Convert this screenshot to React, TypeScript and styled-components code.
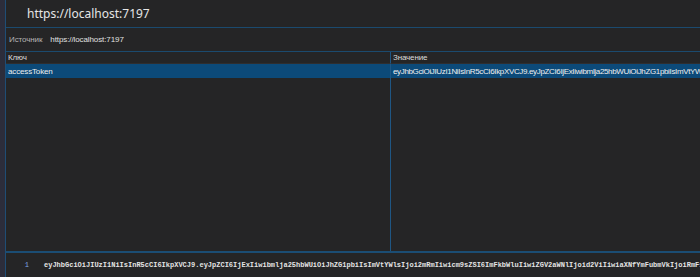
import React from "react";
import styled, { createGlobalStyle } from "styled-components";

const Global = createGlobalStyle`
  html, body { margin: 0; padding: 0; background: #252526; }
  body { font-family: "Liberation Sans", "Noto Sans", sans-serif; overflow: hidden; }
`;

const Root = styled.div`
  display: flex;
  width: 700px;
  height: 277px;
  background: #252526;
  overflow: hidden;
`;

const SideStrip = styled.div`
  width: 5px;
  flex: none;
  background: #2c2d3b;
  border-right: 1px solid #1f4d75;
`;

const Main = styled.div`
  flex: 1;
  min-width: 0;
  display: flex;
  flex-direction: column;
`;

const TitleBar = styled.div`
  height: 27px;
  flex: none;
  display: flex;
  align-items: center;
  padding-left: 21px;
  border-bottom: 1px solid #1b4a6e;
  color: #e6e6e6;
  font-family: "Noto Sans", sans-serif;
  font-size: 12px;
`;

const SourceRow = styled.div`
  height: 23px;
  flex: none;
  display: flex;
  align-items: center;
  gap: 8px;
  padding-left: 3px;
  border-bottom: 1px solid #1b4a6e;
  font-size: 8px;
  letter-spacing: -0.1px;
`;

const SourceLabel = styled.span`
  color: #b4b4b4;
`;

const SourceValue = styled.span`
  color: #e0e0e0;
`;

const Table = styled.div`
  flex: 1;
  display: grid;
  grid-template-columns: 384px 1fr;
  grid-template-rows: 12px 14px 1fr;
  min-height: 0;
`;

const Cell = styled.div<{ $header?: boolean; $selected?: boolean; $divider?: boolean; $tight?: boolean }>`
  display: flex;
  align-items: center;
  padding-left: 2px;
  font-size: 8px;
  letter-spacing: ${(p) => (p.$tight ? "-0.35px" : "-0.15px")};
  white-space: nowrap;
  overflow: hidden;
  color: ${(p) => (p.$selected ? "#f0f0f0" : "#dcdcdc")};
  background: ${(p) => (p.$selected ? "#0c4a79" : "transparent")};
  border-left: ${(p) => (p.$divider ? "1px solid #1f5683" : "none")};
  border-bottom: ${(p) => (p.$header ? "1px solid #2e2e30" : "none")};
`;

const Editor = styled.div`
  height: 24px;
  flex: none;
  display: flex;
  align-items: center;
  border-top: 2px solid #1b4d74;
  font-family: "Liberation Mono", "DejaVu Sans Mono", monospace;
  font-size: 7px;
  white-space: nowrap;
  overflow: hidden;
`;

const LineNo = styled.span`
  width: 38px;
  flex: none;
  text-align: right;
  padding-right: 15px;
  box-sizing: border-box;
  color: #7fa7e0;
`;

const Code = styled.span`
  color: #e4e4e4;
  font-weight: bold;
`;

const token =
  "eyJhbGciOiJIUzI1NiIsInR5cCI6IkpXVCJ9.eyJpZCI6IjExIiwibmlja25hbWUiOiJhZG1pbiIsImVtYWlsIjoi2mRmIiwicm9sZSI6ImFkbWluIiwiZGV2aWNlIjoid2ViIiwiaXNfYmFubmVkIjoiRmFsc2UiLCJleHAiOjE3MDAwMDAwMDB9";

export default function App() {
  return (
    <Root>
      <Global />
      <SideStrip />
      <Main>
        <TitleBar>https://localhost:7197</TitleBar>
        <SourceRow>
          <SourceLabel>Источник</SourceLabel>
          <SourceValue>https://localhost:7197</SourceValue>
        </SourceRow>
        <Table>
          <Cell $header>Ключ</Cell>
          <Cell $header $divider>Значение</Cell>
          <Cell $selected>accessToken</Cell>
          <Cell $selected $divider $tight>{token}</Cell>
          <Cell />
          <Cell $divider />
        </Table>
        <Editor>
          <LineNo>1</LineNo>
          <Code>{token}</Code>
        </Editor>
      </Main>
    </Root>
  );
}
